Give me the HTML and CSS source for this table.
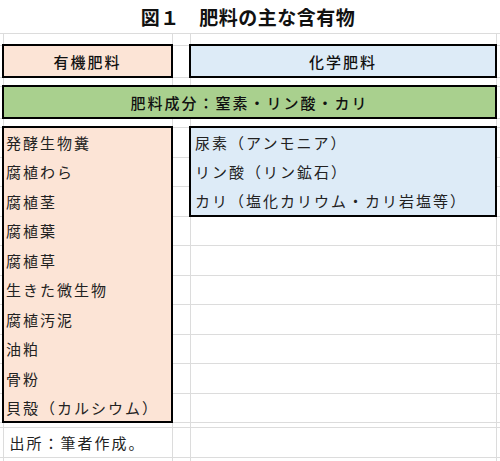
FILE: index.html
```html
<!DOCTYPE html>
<html lang="ja">
<head>
<meta charset="utf-8">
<title>図１ 肥料の主な含有物</title>
<link rel="stylesheet" href="styles.css">
</head>
<body>
<table class="sheet">
  <colgroup>
    <col class="c0"><col class="c1"><col class="c2"><col class="c3"><col class="c4">
  </colgroup>
  <tr class="r-title"><td colspan="5" class="title">図１　肥料の主な含有物</td></tr>
  <tr class="r-sp12"><td></td><td></td><td></td><td></td><td></td></tr>
  <tr class="r-head"><td></td><td class="head pink">有機肥料</td><td></td><td class="head blue">化学肥料</td><td></td></tr>
  <tr class="r-sp9"><td></td><td></td><td></td><td></td><td></td></tr>
  <tr class="r-head"><td></td><td colspan="3" class="head green">肥料成分：窒素・リン酸・カリ</td><td></td></tr>
  <tr class="r-sp9"><td></td><td></td><td></td><td></td><td></td></tr>
  <tr class="r30"><td></td><td class="pk first">発酵生物糞</td><td></td><td class="bl first">尿素（アンモニア）</td><td></td></tr>
  <tr class="r29"><td></td><td class="pk">腐植わら</td><td></td><td class="bl">リン酸（リン鉱石）</td><td></td></tr>
  <tr class="r30"><td></td><td class="pk">腐植茎</td><td></td><td class="bl last">カリ（塩化カリウム・カリ岩塩等）</td><td></td></tr>
  <tr class="r29"><td></td><td class="pk">腐植葉</td><td></td><td></td><td></td></tr>
  <tr class="r30"><td></td><td class="pk">腐植草</td><td></td><td></td><td></td></tr>
  <tr class="r29"><td></td><td class="pk">生きた微生物</td><td></td><td></td><td></td></tr>
  <tr class="r30"><td></td><td class="pk">腐植汚泥</td><td></td><td></td><td></td></tr>
  <tr class="r29"><td></td><td class="pk">油粕</td><td></td><td></td><td></td></tr>
  <tr class="r30"><td></td><td class="pk">骨粉</td><td></td><td></td><td></td></tr>
  <tr class="r29"><td></td><td class="pk last">貝殻（カルシウム）</td><td></td><td></td><td></td></tr>
  <tr class="r-sp5"><td></td><td></td><td></td><td></td><td></td></tr>
  <tr class="r30"><td></td><td class="note">出所：筆者作成。</td><td></td><td></td><td></td></tr>
  <tr class="r-end"><td></td><td></td><td></td><td></td><td></td></tr>
</table>
</body>
</html>
```
FILE: styles.css
```css
html, body {
  margin: 0;
  padding: 0;
  background: #ffffff;
}

body {
  font-family: "Noto Sans CJK JP", "Noto Sans", sans-serif;
  color: #222222;
}

.sheet {
  border-collapse: collapse;
  table-layout: fixed;
  width: 500px;
}

.c0 { width: 3px; }
.c1 { width: 169px; }
.c2 { width: 18px; }
.c3 { width: 306px; }
.c4 { width: 4px; }

.sheet td {
  border: 1px solid #dcdcdc;
  padding: 0;
  font-size: 15px;
  letter-spacing: 2px;
  line-height: 1;
  white-space: nowrap;
  overflow: visible;
  vertical-align: middle;
}

.sheet tr td:first-child { border-left: none; }
.sheet tr td:last-child { border-right-color: #ffffff; }

.r-title { height: 33px; }
.r-sp12 { height: 12px; }
.r-head { height: 32px; }
.r-sp9 { height: 9px; }
.r30 { height: 30px; }
.r29 { height: 29px; }
.r-sp5 { height: 5px; }
.r-end { height: 4px; }
.r-end td { border-bottom: none; }

.sheet td.title {
  border-top: none;
  border-left: none;
  border-right: none;
  text-align: center;
  font-size: 19px;
  font-weight: 700;
  letter-spacing: 0.5px;
  padding-right: 4px;
  color: #111111;
}

.sheet td.head {
  border: 2px solid #000;
  text-align: center;
  font-weight: 500;
  color: #111111;
}

.pink { background: #fce4d6; }
.blue { background: #ddebf7; }
.green { background: #a9d08e; }

.sheet td.pk {
  background: #fce4d6;
  border-left: 2px solid #000;
  border-right: 2px solid #000;
  border-top: 1px solid #fce4d6;
  border-bottom: 1px solid #fce4d6;
  padding-left: 2px;
}

.sheet td.bl {
  background: #ddebf7;
  border-left: 2px solid #000;
  border-right: 2px solid #000;
  border-top: 1px solid #ddebf7;
  border-bottom: 1px solid #ddebf7;
  padding-left: 4px;
}

.sheet td.first { border-top: 2px solid #000; }
.sheet td.last { border-bottom: 2px solid #000; }

.sheet td.note {
  padding-left: 6px;
}
```
